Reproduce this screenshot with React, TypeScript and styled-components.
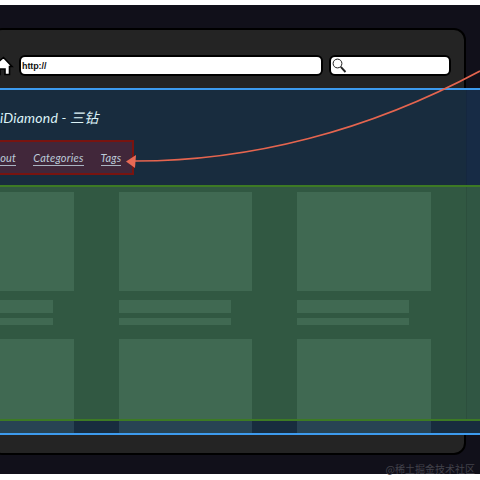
import React from "react";
import styled, { createGlobalStyle } from "styled-components";

const Global = createGlobalStyle`
  html, body { margin: 0; padding: 0; background: #fff; }
  #root { width: 480px; height: 480px; overflow: hidden; }
`;

const Page = styled.div`
  position: relative;
  width: 480px;
  height: 480px;
  background: #fff;
  overflow: hidden;
  font-family: "Liberation Sans", Arial, sans-serif;
`;

const Desk = styled.div`
  margin-top: 5px;
  height: 469px;
  width: 480px;
  background: #11101a;
  padding-top: 23px;
  box-sizing: border-box;
`;

const Win = styled.div`
  width: 476px;
  margin-left: -10px;
  padding-left: 10px;
  height: 427px;
  box-sizing: border-box;
  background: #242424;
  border: 2px solid #000;
  border-radius: 12px;
`;

const Bar = styled.div`
  display: flex;
  align-items: center;
  height: 59px;
  padding-top: 12px;
  box-sizing: border-box;
  gap: 6px;
`;

const HomeIcon = styled.svg`
  width: 11px;
  height: 20px;
  flex: none;
  overflow: visible;
`;

const Field = styled.div<{ $w: number }>`
  width: ${(p) => p.$w}px;
  height: 21px;
  box-sizing: border-box;
  background: #fff;
  border: 2px solid #000;
  border-radius: 6px;
  display: flex;
  align-items: center;
  padding-left: 1px;
  font-size: 9px;
  font-weight: 700;
  letter-spacing: -0.1px;
  color: #111;
  flex: none;
`;

const Bands = styled.div`
  position: absolute;
  left: 0;
  right: 0;
  top: 88px;
  height: 347px;
  box-sizing: border-box;
  border-top: 2px solid #3d9bee;
  border-bottom: 2px solid #3d9bee;
  background: #182c3e;
`;

const Header = styled.div`
  position: relative;
  height: 95px;
  box-sizing: border-box;
  padding-top: 16px;
`;

const Title = styled.div`
  font-family: "Lato", "Noto Sans CJK SC", sans-serif;
  font-style: italic;
  font-size: 14px;
  letter-spacing: 0.2px;
  color: #dcf2f6;
  height: 24px;
  line-height: 24px;
  white-space: nowrap;
`;

const Nav = styled.nav`
  margin-top: 10px;
  margin-left: -20px;
  width: 154px;
  height: 35px;
  box-sizing: border-box;
  background: #41273a;
  border: 2px solid #781410;
  display: flex;
  align-items: center;
  gap: 17px;
  padding-left: 5px;
`;

const NavLink = styled.span`
  font-family: "Lato", sans-serif;
  font-style: italic;
  font-size: 11px;
  letter-spacing: 0.2px;
  color: #bccad8;
  border-bottom: 1px solid #a9b4c2;
  padding-bottom: 1px;
  margin-top: 2px;
  white-space: nowrap;
`;

const Main = styled.div`
  position: relative;
  height: 236px;
  background: #315842;
  border-top: 2px solid #3d7a24;
  border-bottom: 2px solid #3d7a24;
  box-sizing: border-box;
`;

const Grid = styled.div`
  display: grid;
  grid-template-columns: repeat(3, 133.4px);
  column-gap: 45px;
  margin-left: -59.4px;
  padding-top: 5px;
`;

const Card = styled.div`
  display: flex;
  flex-direction: column;
`;

const Thumb = styled.div`
  height: 99px;
  background: #406952;
`;

const LowerThumb = styled(Thumb)`
  height: 80px;
  margin-top: 14px;
`;

const Line = styled.div<{ $h: number; $m: number }>`
  width: 112px;
  height: ${(p) => p.$h}px;
  margin-top: ${(p) => p.$m}px;
  background: #406952;
`;

const Tail = styled.div`
  display: grid;
  grid-template-columns: repeat(3, 133.4px);
  column-gap: 45px;
  margin-left: -59.4px;
  height: 12px;
`;

const TailBlock = styled.div`
  background: #284353;
`;

const Side = styled.div<{ $tint: string }>`
  position: absolute;
  top: 0;
  bottom: 0;
  left: 466px;
  width: 14px;
  background: ${(p) => p.$tint};
  border-left: 1px solid rgba(0, 0, 0, 0.08);
`;

const Mark = styled.div`
  position: absolute;
  right: 5px;
  bottom: 4px;
  font-family: "Noto Sans CJK SC", sans-serif;
  font-size: 10px;
  line-height: 14px;
  color: #42424a;
  white-space: nowrap;
`;

const Overlay = styled.svg`
  position: absolute;
  left: 0;
  top: 0;
  width: 480px;
  height: 480px;
  pointer-events: none;
`;

export default function App() {
  return (
    <Page>
      <Global />
      <Desk>
        <Win>
          <Bar>
            <HomeIcon viewBox="0 0 11 20">
              <path
                d="M1.5 1.5 L-9 10.5 H-6.5 V18.5 H-2 V13 H3 V18.5 H7.5 V10.5 H10 Z"
                fill="#fff"
                stroke="#000"
                strokeWidth="1.6"
              />
            </HomeIcon>
            <Field $w={304}>http://</Field>
            <Field $w={122}>
              <svg width="15" height="15" viewBox="0 0 15 15">
                <circle cx="5.5" cy="5.5" r="4.4" fill="#fff" stroke="#222" strokeWidth="1" />
                <path d="M8.8 8.8 L13.5 14" stroke="#222" strokeWidth="1.9" />
              </svg>
            </Field>
          </Bar>
        </Win>
      </Desk>
      <Bands>
        <Header>
          <Title>iDiamond - 三钻</Title>
          <Nav>
            <NavLink>About</NavLink>
            <NavLink>Categories</NavLink>
            <NavLink>Tags</NavLink>
          </Nav>
          <Side $tint="rgba(24, 44, 84, 0.35)" />
        </Header>
        <Main>
          <Grid>
            {[0, 1, 2].map((i) => (
              <Card key={i}>
                <Thumb />
                <Line $h={13} $m={9} />
                <Line $h={7} $m={5} />
                <LowerThumb />
              </Card>
            ))}
          </Grid>
          <Side $tint="rgba(40, 70, 70, 0.12)" />
        </Main>
        <Tail>
          <TailBlock />
          <TailBlock />
          <TailBlock />
        </Tail>
      </Bands>
      <Mark>@稀土掘金技术社区</Mark>
      <Overlay viewBox="0 0 480 480">
        <path d="M130 161 C 250 162, 370 130, 480 71" fill="none" stroke="#e5654f" strokeWidth="1.7" />
        <path d="M126 161.5 L136 155 L135 168 Z" fill="#e86a55" />
      </Overlay>
    </Page>
  );
}
